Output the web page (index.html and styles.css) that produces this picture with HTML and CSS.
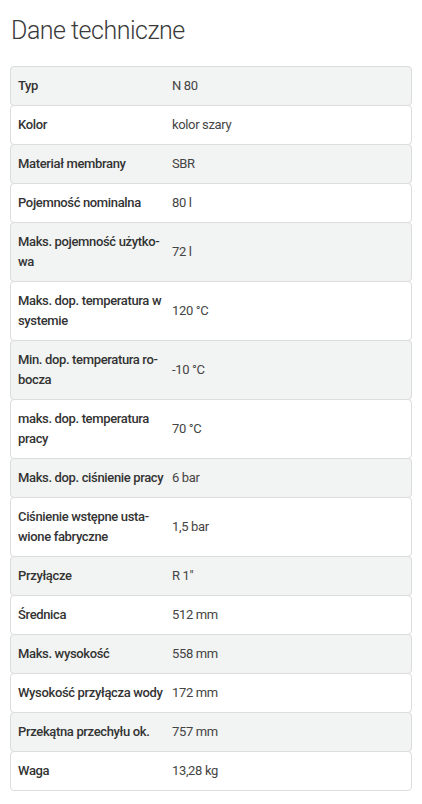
FILE: index.html
```html
<!DOCTYPE html>
<html lang="pl">
<head>
  <meta charset="UTF-8">
  <title>Dane techniczne</title>
  <link rel="stylesheet" href="styles.css">
</head>
<body>
  <section class="specs">
    <h1>Dane techniczne</h1>
    <div class="spec-list">
      <div class="spec-row"><div class="spec-name">Typ</div><div class="spec-value">N 80</div></div>
      <div class="spec-row"><div class="spec-name">Kolor</div><div class="spec-value">kolor szary</div></div>
      <div class="spec-row"><div class="spec-name">Materiał membrany</div><div class="spec-value">SBR</div></div>
      <div class="spec-row"><div class="spec-name">Pojemność nominalna</div><div class="spec-value">80 l</div></div>
      <div class="spec-row"><div class="spec-name">Maks. pojemność użytko&shy;wa</div><div class="spec-value">72 l</div></div>
      <div class="spec-row"><div class="spec-name">Maks. dop. temperatura w systemie</div><div class="spec-value">120 °C</div></div>
      <div class="spec-row"><div class="spec-name">Min. dop. temperatura ro&shy;bocza</div><div class="spec-value">-10 °C</div></div>
      <div class="spec-row"><div class="spec-name">maks. dop. temperatura pracy</div><div class="spec-value">70 °C</div></div>
      <div class="spec-row"><div class="spec-name">Maks. dop. ciśnienie pracy</div><div class="spec-value">6 bar</div></div>
      <div class="spec-row"><div class="spec-name">Ciśnienie wstępne usta&shy;wione fabryczne</div><div class="spec-value">1,5 bar</div></div>
      <div class="spec-row"><div class="spec-name">Przyłącze</div><div class="spec-value">R 1"</div></div>
      <div class="spec-row"><div class="spec-name">Średnica</div><div class="spec-value">512 mm</div></div>
      <div class="spec-row"><div class="spec-name">Maks. wysokość</div><div class="spec-value">558 mm</div></div>
      <div class="spec-row"><div class="spec-name">Wysokość przyłącza wody</div><div class="spec-value">172 mm</div></div>
      <div class="spec-row"><div class="spec-name">Przekątna przechyłu ok.</div><div class="spec-value">757 mm</div></div>
      <div class="spec-row"><div class="spec-name">Waga</div><div class="spec-value">13,28 kg</div></div>
    </div>
  </section>
</body>
</html>
```

FILE: styles.css
```css
/* Основные стили */
body {
  margin: 0;
  font-family: Roboto, "Liberation Sans", sans-serif;
  background-color: #fff;
  color: #333;
}
.specs {
  padding: 0 10px;
}
.specs h1 {
  margin: 0;
  padding: 16px 0 0 1px;
  height: 66px;
  box-sizing: border-box;
  font-family: Roboto, sans-serif;
  font-weight: 300;
  font-size: 25px;
  line-height: 30px;
  letter-spacing: -0.5px;
  color: #3a3a3a;
}
/* Таблица параметров */
.spec-row {
  display: grid;
  grid-template-columns: 161px 1fr;
  align-items: center;
  border: 1px solid #dcdcdc;
  border-radius: 4px;
  margin-top: -1px;
  background-color: #fff;
  font-size: 13px;
  line-height: 20px;
  letter-spacing: -0.35px;
}
.spec-row:first-child {
  margin-top: 0;
}
.spec-row:nth-child(odd) {
  background-color: #f2f3f3;
}
.spec-name {
  padding: 9px 6px 9px 7px;
  hyphens: manual;
  font-weight: 500;
  color: #333;
}
.spec-value {
  padding: 9px 8px 9px 0;
  color: #444;
}
```
